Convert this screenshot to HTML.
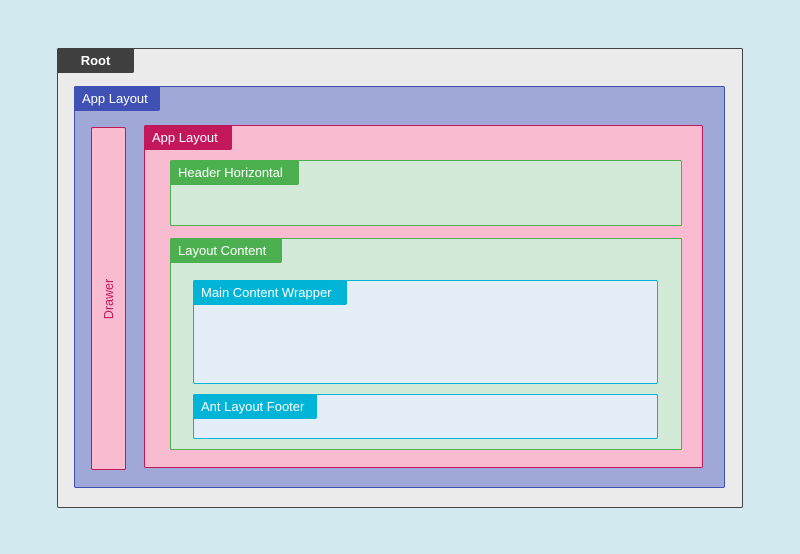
<!DOCTYPE html>
<html><head><meta charset="utf-8"><style>
body{margin:0;width:800px;height:554px;background:#d2eaef;position:relative;overflow:hidden;font-family:"Liberation Sans",sans-serif}
.b{position:absolute;box-sizing:border-box;border:1px solid;border-radius:2px}
.l{position:absolute;left:-1px;top:-1px;color:#fff;font-size:13px;line-height:26px;padding:0 8px;border-radius:2px 0 2px 0;height:25px}
</style></head><body>
<div class="b" style="left:57px;top:48px;width:686px;height:460px;background:#ebebeb;border-color:#444">
 <div class="l" style="background:#404040;width:77px;height:25px;box-sizing:border-box;text-align:center;font-weight:bold;line-height:25px">Root</div></div>
<div class="b" style="left:74px;top:86px;width:651px;height:402px;background:#9fa8d6;border-color:#3f51b5">
 <div class="l" style="background:#3f51b5;width:86px;box-sizing:border-box">App Layout</div></div>
<div class="b" style="left:91px;top:127px;width:35px;height:343px;background:#f8bbd0;border-color:#c2185b">
 <div style="position:absolute;left:50%;top:50%;transform:translate(-50%,-50%) rotate(-90deg);color:#c2185b;font-size:12.5px;white-space:nowrap">Drawer</div></div>
<div class="b" style="left:144px;top:125px;width:559px;height:343px;background:#f8bbd0;border-color:#c2185b">
 <div class="l" style="background:#c2185b;width:88px;box-sizing:border-box">App Layout</div></div>
<div class="b" style="left:170px;top:160px;width:512px;height:66px;background:#d4ead8;border-color:#4caf50">
 <div class="l" style="background:#4caf50;width:129px;box-sizing:border-box">Header Horizontal</div></div>
<div class="b" style="left:170px;top:238px;width:512px;height:212px;background:#d4ead8;border-color:#4caf50">
 <div class="l" style="background:#4caf50;width:112px;box-sizing:border-box">Layout Content</div></div>
<div class="b" style="left:193px;top:280px;width:465px;height:104px;background:#e3eef9;border-color:#00b4d8">
 <div class="l" style="background:#00b4d8;width:154px;box-sizing:border-box">Main Content Wrapper</div></div>
<div class="b" style="left:193px;top:394px;width:465px;height:45px;background:#e3eef9;border-color:#00b4d8">
 <div class="l" style="background:#00b4d8;width:124px;box-sizing:border-box">Ant Layout Footer</div></div>
</body></html>
